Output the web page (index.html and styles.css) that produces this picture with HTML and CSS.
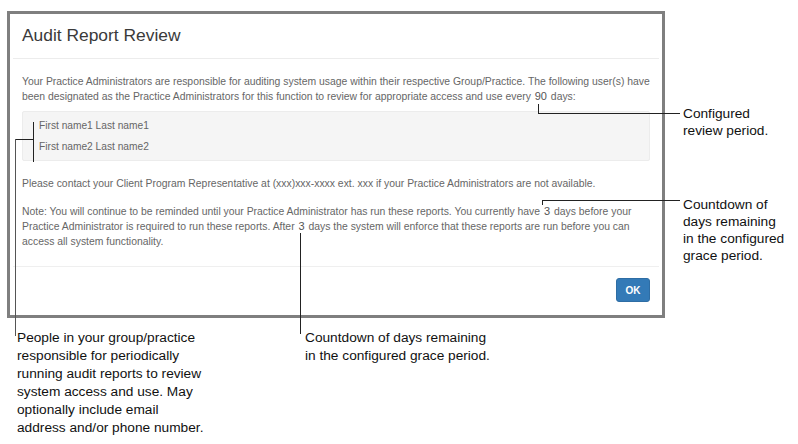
FILE: index.html
```html
<!DOCTYPE html>
<html lang="en">
<head>
<meta charset="utf-8">
<title>Audit Report Review</title>
<link rel="stylesheet" href="styles.css">
</head>
<body>
<div class="page">
  <div class="top">
    <div class="frame">
      <div class="modal-header">
        <h1 class="modal-title">Audit Report Review</h1>
      </div>
      <div class="modal-body">
        <p class="text intro">Your Practice Administrators are responsible for auditing system usage within their respective Group/Practice. The following user(s) have been designated as the Practice Administrators for this function to review for appropriate access and use every <span class="num">90</span> days:</p>
        <div class="well">
          <div class="name">First name1 Last name1</div>
          <div class="name">First name2 Last name2</div>
        </div>
        <p class="text contact">Please contact your Client Program Representative at (xxx)xxx-xxxx ext. xxx if your Practice Administrators are not available.</p>
        <p class="text note-text">Note: You will continue to be reminded until your Practice Administrator has run these reports. You currently have <span class="num">3</span> days before your Practice Administrator is required to run these reports. After <span class="num">3</span> days the system will enforce that these reports are run before you can access all system functionality.</p>
      </div>
      <div class="modal-footer">
        <button class="btn-ok" type="button">OK</button>
      </div>
    </div>
    <div class="side-notes">
      <p class="callout c-review">Configured<br>review period.</p>
      <p class="callout c-countdown">Countdown of<br>days remaining<br>in the configured<br>grace period.</p>
    </div>
  </div>
  <div class="bottom-notes">
    <p class="callout c-people">People in your group/practice<br>responsible for periodically<br>running audit reports to review<br>system access and use. May<br>optionally include email<br>address and/or phone number.</p>
    <p class="callout c-grace">Countdown of days remaining<br>in the configured grace period.</p>
  </div>
  <svg class="leaders" width="798" height="444" viewBox="0 0 798 444">
    <g fill="none" stroke="#222" stroke-width="1" shape-rendering="crispEdges">
      <path d="M538.5 104 V113.5 H680"/>
      <path d="M542.5 205 V200.5 H680"/>
      <path d="M300.5 233 V334"/>
      <path d="M33.5 122 V162"/>
      <path d="M15 139.5 H33"/>
      <path d="M15.5 139 V336" stroke="#555"/>
    </g>
  </svg>
</div>
</body>
</html>
```
FILE: styles.css
```css
* { box-sizing: border-box; }
html, body { margin: 0; padding: 0; background: #fff; }
.page {
  position: relative;
  width: 798px;
  height: 444px;
  overflow: hidden;
  font-family: "Liberation Sans", Arial, sans-serif;
}
.top {
  display: flex;
  align-items: flex-start;
  padding-top: 11px;
  padding-left: 7px;
}
.frame {
  flex: none;
  width: 658px;
  height: 307px;
  border: 3px solid #7f7f7f;
  padding: 0 3px;
  display: flex;
  flex-direction: column;
  background: #fff;
}
.modal-header {
  height: 45px;
  border-bottom: 1px solid #ececec;
  padding: 0 9px;
  display: flex;
  align-items: center;
}
.modal-title {
  margin: 0;
  font-size: 17.4px;
  font-weight: normal;
  color: #3a3a3a;
  line-height: 1;
}
.modal-body {
  flex: 1;
  padding: 15px 9px 0;
  border-bottom: 1px solid #efefef;
}
.text {
  margin: 0;
  font-size: 10.4px;
  line-height: 15px;
  color: #666;
}
.num {
  font-size: 11px;
  line-height: 10px;
  color: #555;
  padding: 0 1px;
}
.well {
  margin-top: 7px;
  height: 50px;
  background: #f5f5f5;
  border: 1px solid #ececec;
  border-radius: 2px;
  padding: 7px 16px 0;
  display: flex;
  flex-direction: column;
  gap: 7px;
}
.name {
  font-size: 10.2px;
  line-height: 14px;
  color: #666;
}
.contact { margin-top: 15px; }
.note-text { margin-top: 13px; }
.modal-footer {
  height: 48px;
  display: flex;
  justify-content: flex-end;
  align-items: flex-start;
  padding: 11px 9px 0;
}
.btn-ok {
  width: 34px;
  height: 24px;
  background: #337ab7;
  border: 1px solid #2e6da4;
  border-radius: 3px;
  color: #fff;
  font-family: "Liberation Sans", Arial, sans-serif;
  font-size: 10px;
  font-weight: bold;
  padding: 0;
}
.side-notes {
  padding-left: 18px;
  display: flex;
  flex-direction: column;
}
.callout {
  margin: 0;
  font-size: 13.7px;
  line-height: 17px;
  color: #111;
  white-space: nowrap;
}
.c-review { margin-top: 94px; }
.c-countdown { margin-top: 57px; }
.bottom-notes {
  display: flex;
  padding-left: 17px;
  margin-top: 11px;
}
.c-people { width: 288px; line-height: 18px; }
.c-grace { line-height: 18px; }
.leaders {
  position: absolute;
  left: 0;
  top: 0;
  pointer-events: none;
}
```
